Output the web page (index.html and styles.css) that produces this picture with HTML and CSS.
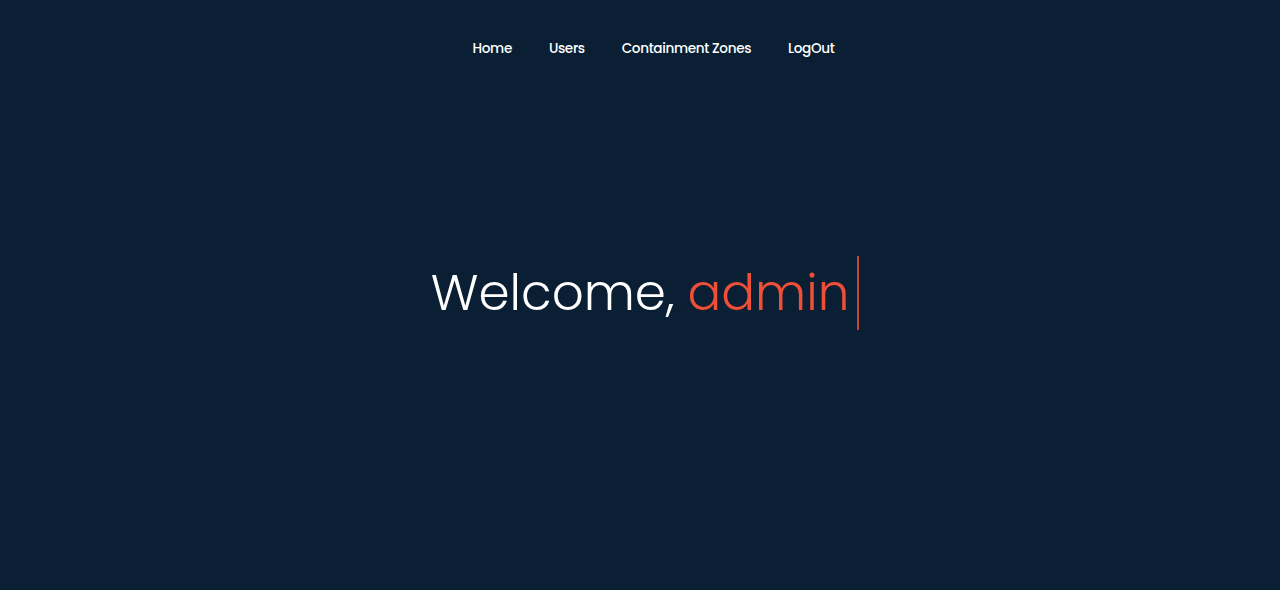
FILE: index.html
```html
<!DOCTYPE html>
<html lang="en">
<head>
<meta charset="utf-8">
<title>Welcome</title>
<link rel="stylesheet" href="styles.css">
</head>
<body>
<header class="nav">
  <ul class="nav-list">
    <li><a class="nav-link" href="#">Home</a></li>
    <li><a class="nav-link" href="#">Users</a></li>
    <li><a class="nav-link" href="#">Containment Zones</a></li>
    <li><a class="nav-link" href="#">LogOut</a></li>
  </ul>
</header>
<main class="hero">
  <h1 class="welcome">Welcome, <span class="name">admin</span><span class="cursor"></span></h1>
</main>
</body>
</html>
```

FILE: styles.css
```css
html, body {
  margin: 0;
  padding: 0;
  height: 100%;
}
body {
  background: #0a1f33;
  color: #ffffff;
  font-family: "Poppins", "Open Sans", "Lato", sans-serif;
  overflow: hidden;
}
.nav {
  display: flex;
  justify-content: center;
  padding: 35px 0 0 27px;
}
.nav-list {
  list-style: none;
  margin: 0;
  padding: 0;
  display: flex;
  gap: 37px;
}
.nav-link {
  color: #ffffff;
  text-decoration: none;
  font-size: 13.6px;
  font-weight: 500;
  letter-spacing: -0.35px;
  line-height: 20px;
}
.hero {
  display: flex;
  justify-content: center;
  padding: 196px 0 0 10px;
}
.welcome {
  margin: 0;
  font-size: 50px;
  font-weight: 300;
  line-height: 74px;
  display: flex;
  align-items: center;
}
.name {
  color: #ef4f37;
  white-space: pre;
  margin-left: 13px;
}
.cursor {
  display: inline-block;
  width: 2px;
  height: 74px;
  background: #ef4f37;
  margin-left: 8px;
  opacity: 0.8;
}
```
